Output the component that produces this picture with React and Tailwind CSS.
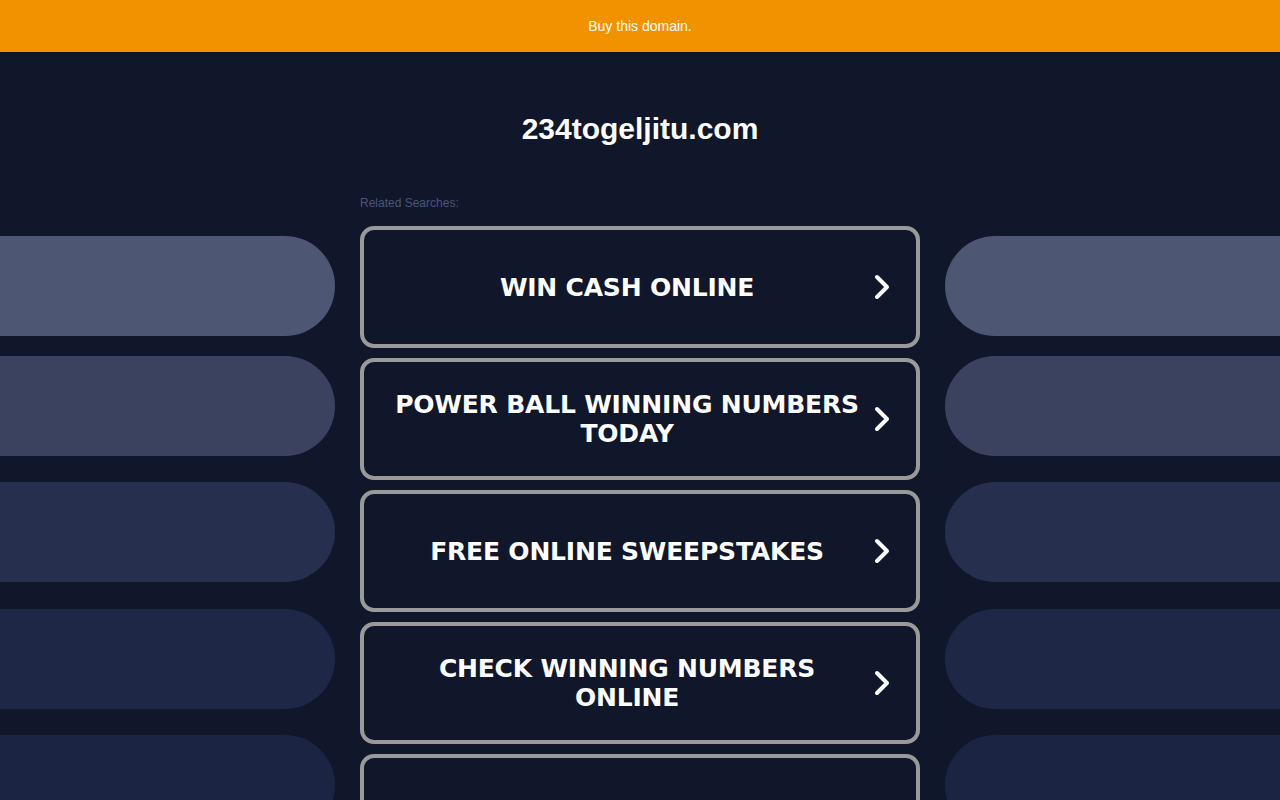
import React from "react";

const items = [
  ["WIN CASH ONLINE"],
  ["POWER BALL WINNING NUMBERS", "TODAY"],
  ["FREE ONLINE SWEEPSTAKES"],
  ["CHECK WINNING NUMBERS", "ONLINE"],
  [""],
];

function Chevron() {
  return (
    <svg width="20" height="28" viewBox="0 0 20 28" fill="none">
      <path d="M5 4 L15 14 L5 24" stroke="white" strokeWidth="4" strokeLinecap="round" strokeLinejoin="round" />
    </svg>
  );
}

function Pills({ side }) {
  const r = side === "left" ? "rounded-r-full" : "rounded-l-full";
  return (
    <div className="flex flex-col pt-[236px]">
      <div className={`h-[100px] bg-[#4d5673] ${r}`} />
      <div className={`h-[100px] mt-[20px] bg-[#3a4260] ${r}`} />
      <div className={`h-[100px] mt-[26px] bg-[#262f4e] ${r}`} />
      <div className={`h-[100px] mt-[27px] bg-[#1e2746] ${r}`} />
      <div className={`h-[100px] mt-[26px] bg-[#1c2443] ${r}`} />
    </div>
  );
}

export default function App() {
  return (
    <div className="w-[1280px] h-[800px] overflow-hidden bg-[#11172b]" style={{ fontFamily: "'Liberation Sans', Arial, sans-serif" }}>
      <div className="h-[52px] bg-[#f39200] flex items-center justify-center text-white text-[14px]">
        Buy this domain.
      </div>
      <div className="grid grid-cols-[335px_560px_335px] gap-x-[25px] -mt-[52px]">
        <Pills side="left" />
        <div className="flex flex-col pt-[52px]">
          <h1 className="text-white font-bold text-[30px] text-center mt-[59px] leading-[36px]">234togeljitu.com</h1>
          <div className="text-[12px] text-[#4b5478] mt-[49px] leading-[14px]">Related Searches:</div>
          <div className="flex flex-col gap-[10px] mt-[16px]">
            {items.map((lines, i) => (
              <div key={i} className="h-[122px] border-4 border-[#9a9a9a] rounded-[14px] flex items-center pl-[28px] pr-[14px]">
                <div className="flex-1 text-center text-white font-bold text-[25px] leading-[29px] tracking-[-0.2px]" style={{ fontFamily: "'DejaVu Sans', Verdana, sans-serif" }}>
                  {lines.map((l, j) => (
                    <div key={j} className="whitespace-nowrap">{l}</div>
                  ))}
                </div>
                {lines[0] && (
                  <div className="w-[40px] flex justify-center">
                    <Chevron />
                  </div>
                )}
              </div>
            ))}
          </div>
        </div>
        <Pills side="right" />
      </div>
    </div>
  );
}
